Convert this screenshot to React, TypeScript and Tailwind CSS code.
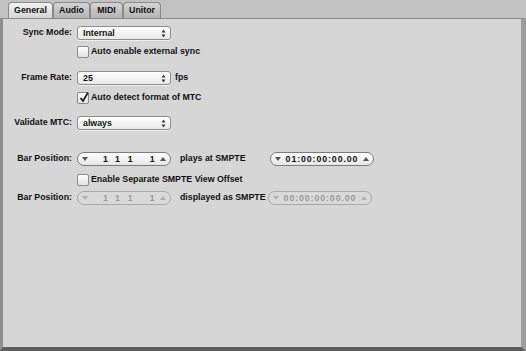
import React from "react";

const font = { fontFamily: '"Liberation Sans", Arial, sans-serif' };

function UpDown() {
  return (
    <svg width="5" height="9" viewBox="0 0 5 9" className="shrink-0">
      <path d="M2.5 0.5 L4.5 3.5 L0.5 3.5 Z" fill="#3a3a3a" />
      <path d="M0.5 5.5 L4.5 5.5 L2.5 8.5 Z" fill="#3a3a3a" />
    </svg>
  );
}

function Tri({ up, color }: { up?: boolean; color: string }) {
  return (
    <svg width="6" height="4" viewBox="0 0 6 4" className="shrink-0">
      {up ? <path d="M3 0 L6 4 L0 4 Z" fill={color} /> : <path d="M0 0 L6 0 L3 4 Z" fill={color} />}
    </svg>
  );
}

function Popup({ value }: { value: string }) {
  return (
    <div className="flex h-[14px] w-[94px] items-center justify-between rounded-[3px] border border-[#8c8c8c] bg-gradient-to-b from-[#ffffff] to-[#e9e9e9] pl-[5px] pr-[4px] shadow-[0_1px_0_rgba(255,255,255,0.6)]">
      <span className="text-[8.8px] font-bold leading-none text-[#111]">{value}</span>
      <UpDown />
    </div>
  );
}

function Check({ checked, label }: { checked?: boolean; label: string }) {
  return (
    <div className="flex h-[13px] items-center gap-[2px] pl-[74px]">
      <div className="relative h-[12px] w-[12px] rounded-[2px] border border-[#8a8a8a] bg-gradient-to-b from-[#ffffff] to-[#e4e4e4]">
        {checked && (
          <svg width="13" height="12" viewBox="0 0 13 12" className="absolute -top-[2px] left-[0px]">
            <path d="M2.5 7 L5 10 L10 1.5" stroke="#222" strokeWidth="1.8" fill="none" />
          </svg>
        )}
      </div>
      <span className="text-[8.8px] font-bold text-[#111]">{label}</span>
    </div>
  );
}

function Label({ text }: { text: string }) {
  return <span className="w-[74px] shrink-0 pr-[5px] text-right text-[8.8px] font-bold text-[#111]">{text}</span>;
}

function BarField({ disabled }: { disabled?: boolean }) {
  const c = disabled ? "#b0b0b0" : "#555";
  return (
    <div
      className={`flex h-[14px] w-[94px] items-center rounded-full border px-[4px] ${
        disabled ? "border-[#aaaaaa] bg-[#d9d9d9]" : "border-[#7c7c7c] bg-gradient-to-b from-[#ffffff] to-[#e6e6e6]"
      }`}
    >
      <Tri color={c} />
      <span className={`ml-[15px] flex text-[8.8px] font-bold leading-none ${disabled ? "text-[#9a9a9a]" : "text-[#111]"}`}>
        <span>1</span>
        <span className="ml-[7px]">1</span>
        <span className="ml-[8px]">1</span>
        <span className="ml-[17px]">1</span>
      </span>
      <span className="ml-auto">
        <Tri up color={c} />
      </span>
    </div>
  );
}

function SmpteField({ value, disabled }: { value: string; disabled?: boolean }) {
  const c = disabled ? "#b0b0b0" : "#555";
  return (
    <div
      className={`flex h-[14px] w-[104px] items-center justify-between rounded-full border px-[4px] ${
        disabled ? "border-[#aaaaaa] bg-[#d9d9d9]" : "border-[#7c7c7c] bg-gradient-to-b from-[#ffffff] to-[#e6e6e6]"
      }`}
    >
      <Tri color={c} />
      <span
        className={`text-[8.8px] font-bold leading-none tracking-[0.9px] ${disabled ? "text-[#9a9a9a]" : "text-[#111]"}`}
      >
        {value}
      </span>
      <Tri up color={c} />
    </div>
  );
}

function Tab({ label, active, w }: { label: string; active?: boolean; w: string }) {
  return (
    <div
      className={`flex h-[16px] items-center justify-center rounded-t-[4px] border border-b-0 border-[#8a8a8a] text-[8.8px] font-bold text-[#111] ${w} ${
        active ? "bg-gradient-to-b from-[#f2f2f2] to-[#d6d6d6]" : "bg-gradient-to-b from-[#d4d4d4] to-[#b4b4b4]"
      }`}
    >
      {label}
    </div>
  );
}

export default function App() {
  return (
    <div className="flex h-[351px] w-[526px] flex-col bg-[#c2c2c2]" style={font}>
      <div className="flex h-[18px] items-end pl-[8px]">
        <Tab label="General" active w="w-[45px]" />
        <Tab label="Audio" w="w-[37px]" />
        <Tab label="MIDI" w="w-[33px]" />
        <Tab label="Unitor" w="w-[38px]" />
      </div>
      <div className="flex flex-1 flex-col border-t border-l-[3px] border-r-[5px] border-b-[4px] border-t-[#8a8a8a] border-l-[#8f8f8f] border-r-[#9c9c9c] border-b-[#5c5c5c] bg-[#d6d6d6]">
        <div className="mt-[7px] flex h-[14px] items-center">
          <Label text="Sync Mode:" />
          <Popup value="Internal" />
        </div>
        <div className="mt-[5px]">
          <Check label="Auto enable external sync" />
        </div>
        <div className="mt-[13px] flex h-[14px] items-center">
          <Label text="Frame Rate:" />
          <Popup value="25" />
          <span className="ml-[4px] text-[8.8px] font-bold text-[#111]">fps</span>
        </div>
        <div className="mt-[6px]">
          <Check checked label="Auto detect format of MTC" />
        </div>
        <div className="mt-[12px] flex h-[14px] items-center">
          <Label text="Validate MTC:" />
          <Popup value="always" />
        </div>
        <div className="mt-[22px] flex h-[14px] items-center">
          <Label text="Bar Position:" />
          <BarField />
          <span className="ml-[9px] w-[90px] text-[8.8px] font-bold text-[#111]">plays at SMPTE</span>
          <SmpteField value="01:00:00:00.00" />
        </div>
        <div className="mt-[7px]">
          <Check label="Enable Separate SMPTE View Offset" />
        </div>
        <div className="mt-[5px] flex h-[14px] items-center">
          <Label text="Bar Position:" />
          <BarField disabled />
          <span className="ml-[9px] w-[88px] text-[8.8px] font-bold text-[#111]">displayed as SMPTE</span>
          <SmpteField disabled value="00:00:00:00.00" />
        </div>
      </div>
    </div>
  );
}
